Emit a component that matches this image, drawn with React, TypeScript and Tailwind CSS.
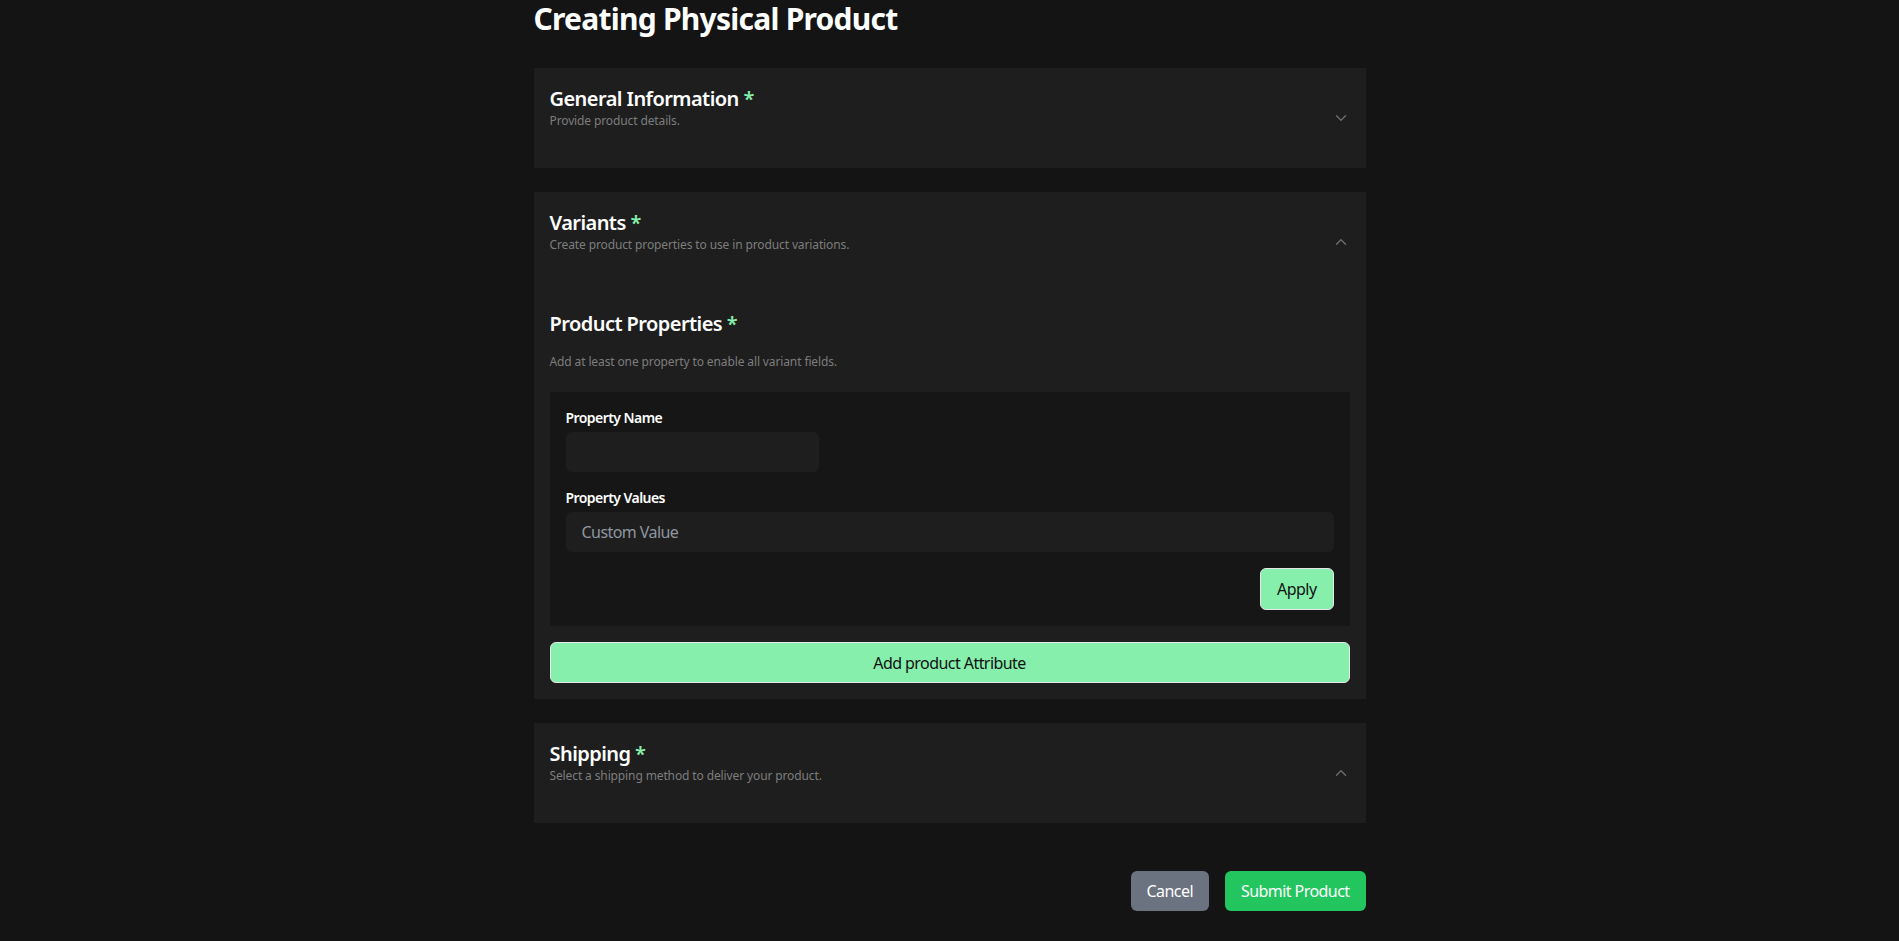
import { ChevronDown, ChevronUp } from "lucide-react";

const SectionHeader = ({
  title,
  subtitle,
  open,
}: {
  title: string;
  subtitle: string;
  open: boolean;
}) => (
  <div className="flex h-[100px] items-center justify-between px-4">
    <div className="self-start pt-[17px]">
      <h2 className="text-xl leading-7 font-semibold text-white">
        {title} <span className="text-[#86efac]">*</span>
      </h2>
      <p className="text-xs leading-4 tracking-[-0.01em] text-[#7d7d7d]">{subtitle}</p>
    </div>
    {open ? (
      <ChevronUp className="h-[18px] w-[18px] text-[#6a6a6a]" />
    ) : (
      <ChevronDown className="h-[18px] w-[18px] text-[#6a6a6a]" />
    )}
  </div>
);

const App = () => {
  return (
    <div
      className="min-h-screen bg-[#141414] tracking-[-0.035em] text-white"
      style={{ fontFamily: '"Noto Sans", "Open Sans", sans-serif' }}
    >
      <div className="mx-auto max-w-4xl px-8 pb-8">
        <h1 className="pt-px text-3xl leading-9 font-bold tracking-tight text-white">
          Creating Physical Product
        </h1>

        <div className="mt-[31px] space-y-6">
          <section className="bg-[#1e1e1e]">
            <SectionHeader title="General Information" subtitle="Provide product details." open={false} />
          </section>

          <section className="bg-[#1e1e1e]">
            <SectionHeader
              title="Variants"
              subtitle="Create product properties to use in product variations."
              open
            />
            <div className="px-4 pb-4 pt-[18px]">
              <h3 className="text-xl leading-7 font-semibold text-white">
                Product Properties <span className="text-[#86efac]">*</span>
              </h3>
              <p className="mt-4 text-xs leading-4 tracking-[-0.01em] text-[#7d7d7d]">
                Add at least one property to enable all variant fields.
              </p>

              <div className="mt-[22px] bg-[#161616] p-4">
                <label className="block text-sm leading-5 font-semibold text-white">Property Name</label>
                <input
                  type="text"
                  className="mt-1 h-10 w-[253px] rounded-md bg-[#1e1e1e] px-4 text-base text-white outline-none"
                />
                <label className="mt-4 block text-sm leading-5 font-semibold text-white">
                  Property Values
                </label>
                <input
                  type="text"
                  placeholder="Custom Value"
                  className="mt-1 h-10 w-full rounded-md bg-[#1e1e1e] px-4 text-base tracking-[-0.035em] text-white outline-none placeholder:text-[#8f96a0]"
                />
                <div className="mt-4 flex justify-end">
                  <button className="h-[42px] rounded-md border border-[#e5e7eb] bg-[#86efac] px-4 text-base tracking-[-0.035em] text-[#111]">
                    Apply
                  </button>
                </div>
              </div>

              <button className="mt-4 h-[41px] w-full rounded-md border border-[#e5e7eb] bg-[#86efac] text-base tracking-[-0.035em] text-[#111]">
                Add product Attribute
              </button>
            </div>
          </section>

          <section className="bg-[#1e1e1e]">
            <SectionHeader
              title="Shipping"
              subtitle="Select a shipping method to deliver your product."
              open
            />
          </section>
        </div>

        <div className="mt-12 flex justify-end gap-4">
          <button className="h-10 rounded-md bg-[#6b7280] px-4 text-base tracking-[-0.035em] text-white">
            Cancel
          </button>
          <button className="h-10 rounded-md bg-[#22c55e] px-4 text-base tracking-[-0.035em] text-white">
            Submit Product
          </button>
        </div>
      </div>
    </div>
  );
};

export default App;
